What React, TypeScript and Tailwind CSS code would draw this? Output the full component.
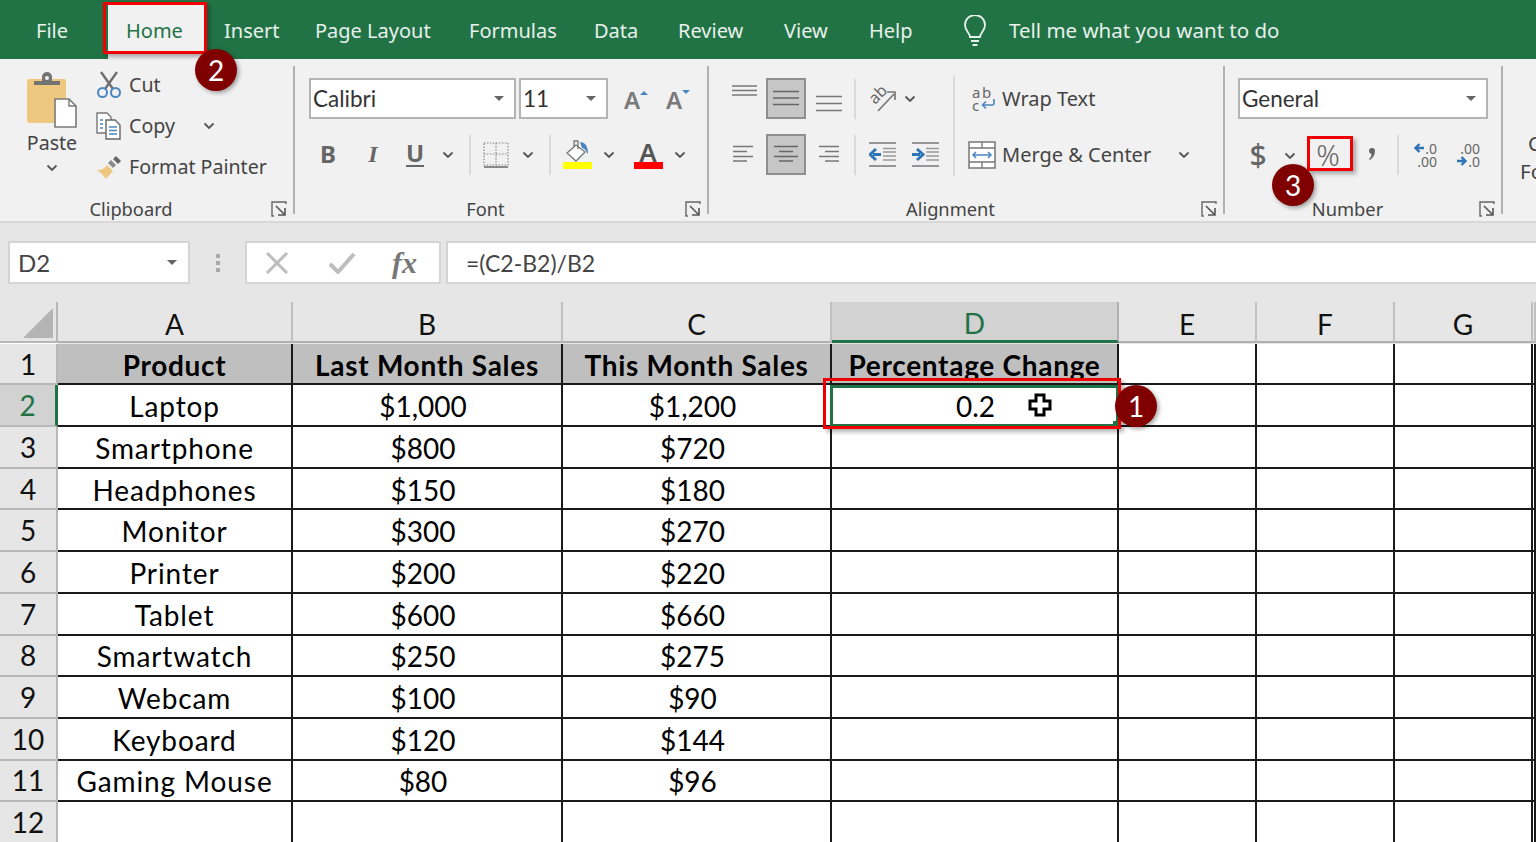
import type { ReactNode } from 'react';

const UI = 'font-["Noto_Sans",sans-serif]';
const CELL = 'font-["Lato","Noto_Sans",sans-serif]';

const tabs = [
  { label: 'Insert', width: 'w-[91px]' },
  { label: 'Page Layout', width: 'w-[154px]' },
  { label: 'Formulas', width: 'w-[125px]' },
  { label: 'Data', width: 'w-[84px]' },
  { label: 'Review', width: 'w-[106px]' },
  { label: 'View', width: 'w-[85px]' },
  { label: 'Help', width: 'w-[93px]' },
];

const products = [
  ['Laptop', '$1,000', '$1,200'],
  ['Smartphone', '$800', '$720'],
  ['Headphones', '$150', '$180'],
  ['Monitor', '$300', '$270'],
  ['Printer', '$200', '$220'],
  ['Tablet', '$600', '$660'],
  ['Smartwatch', '$250', '$275'],
  ['Webcam', '$100', '$90'],
  ['Keyboard', '$120', '$144'],
  ['Gaming Mouse', '$80', '$96'],
  ['', '', ''],
];

function Chevron({ className = '' }: { className?: string }) {
  return (
    <svg width="12" height="8" viewBox="0 0 12 8" className={`shrink-0 ${className}`}>
      <path d="M1.5 1.5 6 6l4.5-4.5" fill="none" stroke="#555" strokeWidth="1.8" />
    </svg>
  );
}

function Launcher() {
  return (
    <svg width="16" height="16" viewBox="0 0 16 16">
      <path d="M15 3V1H1v14h2" fill="none" stroke="#666" strokeWidth="1.4" />
      <path d="M5 5l8 8M14 7v7H7" fill="none" stroke="#555" strokeWidth="1.6" />
    </svg>
  );
}

function Caret() {
  return <span className="h-0 w-0 border-x-[5px] border-t-[5px] border-x-transparent border-t-[#666]" />;
}

function Combo({ value, className }: { value: string; className: string }) {
  return (
    <div className={`flex h-[41px] items-center justify-between border-2 border-[#b4b4b4] bg-white pl-[2px] pr-[10px] ${CELL} text-[22.500px] text-[#333] ${className}`}>
      <span>{value}</span>
      <Caret />
    </div>
  );
}

function Lines({ rows, width = 30, height = 28, color = '#777' }: { rows: number[][]; width?: number; height?: number; color?: string }) {
  return (
    <svg width={width} height={height} viewBox={`0 0 ${width} ${height}`} className="shrink-0">
      {rows.map(([x1, x2, y], i) => (
        <path key={i} d={`M${x1} ${y}H${x2}`} stroke={color} strokeWidth="1.5" />
      ))}
    </svg>
  );
}

function Group({ width, label, children }: { width: string; label: string; children: ReactNode }) {
  return (
    <section className={`flex h-full shrink-0 flex-col ${width}`}>
      <div className="h-[136px] shrink-0">{children}</div>
      <div className="flex h-[28px] items-center">
        <span className={`flex-1 pr-[3px] text-center ${UI} text-[18.300px] text-[#444]`}>{label}</span>
        <span className="flex w-[28px] justify-center">
          <Launcher />
        </span>
      </div>
    </section>
  );
}

function Sep() {
  return <div className="my-[7px] w-[2px] shrink-0 bg-[#b0b0b0]" />;
}

function MiniSep() {
  return <div className="h-[40px] w-[2px] shrink-0 bg-[#dadada]" />;
}

function Slot({ w, children, className = '' }: { w: string; children?: ReactNode; className?: string }) {
  return <div className={`flex h-[41px] shrink-0 items-center justify-center *:shrink-0 ${w} ${className}`}>{children}</div>;
}

function PasteIcon() {
  return (
    <svg width="52" height="56" viewBox="0 0 52 56">
      <rect x="1" y="7" width="39" height="44" rx="2" fill="#edc87e" />
      <path d="M8 13V9h8V5a4 4 0 0 1 10 0v4h8v4z" fill="#737373" />
      <circle cx="21" cy="6" r="2" fill="#f1f1f1" />
      <path d="M29 27h14l7 7v21H29z" fill="#fff" stroke="#7a7a7a" strokeWidth="1.6" />
      <path d="M43 27v7h7" fill="none" stroke="#7a7a7a" strokeWidth="1.4" />
    </svg>
  );
}

function CutIcon() {
  return (
    <svg width="26" height="28" viewBox="0 0 26 28">
      <path d="M5 1l12 17M21 1L9 18" stroke="#6f6f6f" strokeWidth="2.4" fill="none" />
      <circle cx="6.5" cy="21.5" r="4.5" fill="none" stroke="#4a86c0" strokeWidth="2" />
      <circle cx="19.5" cy="21.5" r="4.5" fill="none" stroke="#4a86c0" strokeWidth="2" />
    </svg>
  );
}

function CopyIcon() {
  return (
    <svg width="26" height="28" viewBox="0 0 26 28">
      <path d="M1 1h10l4 4v16H1z" fill="#fff" stroke="#777" strokeWidth="1.4" />
      <path d="M10 8h9l5 5v14H10z" fill="#fff" stroke="#666" strokeWidth="1.4" />
      <path d="M13 15h8M13 18.500h8M13 22h8M4 8h3M4 12h3M4 16h3" stroke="#4a86c0" strokeWidth="1.4" />
    </svg>
  );
}

function PainterIcon() {
  return (
    <svg width="26" height="24" viewBox="0 0 26 24">
      <path d="M1 15c5 0 8-2 10-5l6 6c-3 3-5 6-7 8-2-3-5-6-9-9z" fill="#edc87e" />
      <path d="M12 8l3-3 5 5-3 3z" fill="#8a8a8a" />
      <path d="M17 4l3-3 5 5-3 3z" fill="#666" />
    </svg>
  );
}

function GrowFont({ up }: { up: boolean }) {
  return (
    <span className={`flex h-[36px] w-[24px] items-start ${UI}`}>
      <span className="w-[16px] pt-[2px] text-[24px] font-semibold leading-[34px] text-[#7a7a7a]">A</span>
      <svg width="8" height="5" viewBox="0 0 8 5" className="mt-[9px]">
        <path d={up ? 'M0 5l4-4 4 4z' : 'M0 0h8L4 4z'} fill="#4a86c0" />
      </svg>
    </span>
  );
}

function BorderIcon() {
  return (
    <svg width="26" height="26" viewBox="0 0 26 26">
      <path d="M1 1h24v22H1zM13 1v22M1 12h24" fill="none" stroke="#8a8a8a" strokeWidth="1.2" strokeDasharray="1.500 1.500" />
      <path d="M1 25h24" stroke="#666" strokeWidth="1.500" />
    </svg>
  );
}

function FillIcon() {
  return (
    <svg width="30" height="30" viewBox="0 0 30 30">
      <path d="M13 5 4 13l9 8 9-9z" fill="#fff" stroke="#777" strokeWidth="1.3" />
      <path d="M11 7V1h4v8" fill="none" stroke="#777" strokeWidth="1.3" />
      <path d="M17 2c5 0 8 4 8 12-2-2-2-5-6-6z" fill="#4a86c0" />
      <rect x="0" y="22" width="29" height="7" fill="#ffff00" />
    </svg>
  );
}

function FontColorIcon() {
  return (
    <span className={`flex w-[29px] flex-col items-center ${UI}`}>
      <span className="h-[22px] text-[26px] font-semibold leading-[24px] text-[#555]">A</span>
      <span className="h-[7px] w-[29px] bg-[#ff0000]" />
    </span>
  );
}

function OrientationIcon() {
  return (
    <span className={`relative block h-[28px] w-[28px] ${UI}`}>
      <span className="absolute left-[0px] top-[1px] -rotate-45 text-[16px] leading-[16px] text-[#666]">ab</span>
      <svg width="28" height="28" viewBox="0 0 28 28" className="absolute left-0 top-0">
        <path d="M10 26 26 9M19 7h8v8" fill="none" stroke="#777" strokeWidth="1.7" />
      </svg>
    </span>
  );
}

function IndentIcon({ right }: { right: boolean }) {
  return (
    <svg width="27" height="25" viewBox="0 0 27 25">
      <path d="M0 1h27M0 24h27" stroke="#777" strokeWidth="1.500" />
      <path d="M14 6.500h13M14 10h13M14 14h13M14 18h13" stroke="#999" strokeWidth="1.300" />
      <path d={right ? 'M0 12.500h8M5 7l6 5.500-6 5.500' : 'M12 12.500H4M7 7l-6 5.500 6 5.500'} fill="none" stroke="#2f75b5" strokeWidth="3" />
    </svg>
  );
}

function WrapIcon() {
  return (
    <span className={`flex w-[24px] flex-col ${UI} text-[15px] leading-[13px] text-[#666]`}>
      <span className="tracking-[1.5px]">ab</span>
      <span className="flex items-center">
        c
        <svg width="14" height="12" viewBox="0 0 14 12" className="ml-[2px]">
          <path d="M13 0v4a2 2 0 0 1-2 2H2M5 2.500 1.500 6 5 9.500" fill="none" stroke="#4a86c0" strokeWidth="1.600" />
        </svg>
      </span>
    </span>
  );
}

function MergeIcon() {
  return (
    <svg width="28" height="28" viewBox="0 0 28 28">
      <rect x="1" y="1" width="26" height="26" fill="#fff" stroke="#777" strokeWidth="1.500" />
      <path d="M1 7h26M1 21h26M14 1v6M14 21v6" stroke="#777" strokeWidth="1.300" />
      <path d="M5 14h18M8 11l-3 3 3 3M20 11l3 3-3 3" fill="none" stroke="#4a86c0" strokeWidth="1.500" />
    </svg>
  );
}

function DecimalIcon({ more }: { more: boolean }) {
  const arrow = more ? (
    <svg width="10" height="10" viewBox="0 0 10 10" className="mr-[1px]">
      <path d="M10 5H2M5.500 1 1.500 5l4 4" fill="none" stroke="#2f75b5" strokeWidth="2.400" />
    </svg>
  ) : (
    <svg width="10" height="10" viewBox="0 0 10 10" className="mr-[1px]">
      <path d="M0 5h8M4.500 1l4 4-4 4" fill="none" stroke="#2f75b5" strokeWidth="2.400" />
    </svg>
  );
  return (
    <span className={`flex w-[24px] flex-col items-end ${UI} text-[14px] leading-[13px] text-[#666]`}>
      {more ? (
        <>
          <span className="flex items-center">{arrow}.0</span>
          <span>.00</span>
        </>
      ) : (
        <>
          <span>.00</span>
          <span className="flex items-center">{arrow}.0</span>
        </>
      )}
    </span>
  );
}

function Ribbon() {
  return (
    <div className="flex h-[164px] overflow-hidden border-b-2 border-[#d8d8d8] bg-[#f1f1f1]">
      <Group width="w-[293px]" label="Clipboard">
        <div className={`flex ${UI} text-[19.600px] text-[#444]`}>
          <div className="flex w-[96px] flex-col items-center pl-[8px] pt-[13px]">
            <PasteIcon />
            <span className="mt-[1px] leading-[28px]">Paste</span>
            <Chevron className="mt-[7px]" />
          </div>
          <div className="pt-[5px]">
            <div className="flex h-[41px] items-center">
              <span className="w-[33px]"><CutIcon /></span>Cut
            </div>
            <div className="flex h-[41px] items-center">
              <span className="w-[33px]"><CopyIcon /></span>Copy
              <Chevron className="ml-[28px]" />
            </div>
            <div className="flex h-[41px] items-center">
              <span className="w-[33px]"><PainterIcon /></span>Format Painter
            </div>
          </div>
        </div>
      </Group>
      <Sep />
      <Group width="w-[412px]" label="Font">
        <div className="pl-[14px] pt-[19px]">
          <div className="flex">
            <Combo value="Calibri" className="w-[207px]" />
            <Combo value="11" className="ml-[3px] w-[89px]" />
            <Slot w="w-[50px]" className="pl-[6px]"><GrowFont up /></Slot>
            <Slot w="w-[40px]"><GrowFont up={false} /></Slot>
          </div>
          <div className={`mt-[15px] flex items-center ${UI} text-[24px] text-[#666]`}>
            <Slot w="w-[38px]" className="pb-[2px]"><b>B</b></Slot>
            <Slot w="w-[52px]" className="pb-[2px]"><i className="font-['Liberation_Serif'] font-bold">I</i></Slot>
            <Slot w="w-[32px]" className="pb-[2px]"><b className="border-b-2 border-[#666] leading-[24px]">U</b></Slot>
            <Slot w="w-[34px]"><Chevron /></Slot>
            <Slot w="w-[10px]"><MiniSep /></Slot>
            <Slot w="w-[41px]"><BorderIcon /></Slot>
            <Slot w="w-[24px]"><Chevron /></Slot>
            <Slot w="w-[20px]"><MiniSep /></Slot>
            <Slot w="w-[36px]"><FillIcon /></Slot>
            <Slot w="w-[26px]"><Chevron /></Slot>
            <Slot w="w-[52px]"><FontColorIcon /></Slot>
            <Slot w="w-[12px]"><Chevron /></Slot>
          </div>
        </div>
      </Group>
      <Sep />
      <Group width="w-[514px]" label="Alignment">
        <div className="flex pl-[17px] pt-[17px]">
          <div className="w-[227px] pt-[2px]">
            <div className="flex">
              <Slot w="w-[40px]"><Lines rows={[[1, 26, 1], [1, 26, 5.5], [1, 26, 10]]} /></Slot>
              <Slot w="w-[40px]" className="border-2 border-[#8e8e8e] bg-[#c6c6c6]"><Lines rows={[[2, 28, 6.5], [2, 28, 13], [2, 28, 19.5]]} color="#666" /></Slot>
              <Slot w="w-[46px]"><Lines rows={[[2, 28, 11.5], [2, 28, 18.5], [2, 28, 25.5]]} /></Slot>
              <Slot w="w-[6px]"><MiniSep /></Slot>
              <Slot w="w-[48px]"><OrientationIcon /></Slot>
              <Slot w="w-[8px]"><Chevron /></Slot>
            </div>
            <div className="mt-[15px] flex">
              <Slot w="w-[40px]"><Lines rows={[[2, 22, 5.5], [2, 16, 10.5], [2, 22, 15.5], [2, 16, 20]]} /></Slot>
              <Slot w="w-[40px]" className="border-2 border-[#8e8e8e] bg-[#c6c6c6]"><Lines rows={[[3, 27, 5.5], [8, 22, 10.5], [3, 27, 15.5], [8, 22, 20]]} color="#666" /></Slot>
              <Slot w="w-[46px]"><Lines rows={[[5, 25, 5.5], [11, 25, 10.5], [5, 25, 15.5], [11, 25, 20]]} /></Slot>
              <Slot w="w-[6px]"><MiniSep /></Slot>
              <Slot w="w-[48px]"><IndentIcon right={false} /></Slot>
              <Slot w="w-[38px]"><IndentIcon right /></Slot>
            </div>
          </div>
          <div className="h-[100px] w-[2px] shrink-0 bg-[#dadada]" />
          <div className={`${UI} pt-[2px] text-[20px] text-[#444]`}>
            <div className="flex h-[41px] items-center">
              <span className="ml-[17px] mr-[6px] flex w-[24px]"><WrapIcon /></span>Wrap Text
            </div>
            <div className="mt-[15px] flex h-[41px] items-center">
              <span className="ml-[13px] mr-[6px] flex w-[28px]"><MergeIcon /></span>Merge &amp; Center
              <Chevron className="ml-[27px]" />
            </div>
          </div>
        </div>
      </Group>
      <Sep />
      <Group width="w-[276px]" label="Number">
        <div className="pl-[13px] pt-[19px]">
          <Combo value="General" className="w-[250px]" />
          <div className={`mt-[15px] flex ${UI} text-[28px] text-[#666]`}>
            <Slot w="w-[40px]" className="text-[30px] font-medium">$</Slot>
            <Slot w="w-[24px]" className="pt-[3px]"><Chevron /></Slot>
            <Slot w="w-[52px]" className="text-[29px] font-light">%</Slot>
            <Slot w="w-[36px]">
              <svg width="10" height="16" viewBox="0 0 10 16">
                <path d="M2 4a3 3 0 0 1 6 0c0 4-2 7-5 9l-1-1c1.500-1 2.500-3 2.500-5A3 3 0 0 1 2 4z" fill="#666" />
              </svg>
            </Slot>
            <Slot w="w-[16px]"><MiniSep /></Slot>
            <Slot w="w-[38px]"><DecimalIcon more /></Slot>
            <Slot w="w-[48px]"><DecimalIcon more={false} /></Slot>
          </div>
        </div>
      </Group>
      <Sep />
      <div className={`flex-1 pl-[17px] pt-[70px] ${UI} text-[20.500px] leading-[28px] text-[#444]`}>
        <div className="pl-[8px]">C</div>
        <div>Fo</div>
      </div>
    </div>
  );
}

function FormulaBar() {
  return (
    <div className={`flex h-[79px] bg-[#e6e6e6] pl-[8px] pt-[18px] ${CELL} text-[24px]`}>
      <div className="flex h-[43px] w-[182px] items-center justify-between border-2 border-[#d4d4d4] bg-white pl-[8px] pr-[11px] text-[#444]">
        <span>D2</span>
        <Caret />
      </div>
      <div className="flex h-[43px] w-[55px] flex-col items-center justify-center gap-[3px]">
        <span className="h-[4px] w-[4px] bg-[#aaa]" />
        <span className="h-[4px] w-[4px] bg-[#aaa]" />
        <span className="h-[4px] w-[4px] bg-[#aaa]" />
      </div>
      <div className="flex h-[43px] w-[196px] items-center border-2 border-[#d4d4d4] bg-white">
        <span className="ml-[18px]">
          <svg width="24" height="22" viewBox="0 0 24 22">
            <path d="M2 1l20 20M22 1 2 21" stroke="#bdbdbd" strokeWidth="3" />
          </svg>
        </span>
        <span className="ml-[39px]">
          <svg width="28" height="22" viewBox="0 0 28 22">
            <path d="M2 12l8 8L26 2" fill="none" stroke="#bdbdbd" strokeWidth="4" />
          </svg>
        </span>
        <span className="ml-[36px] font-['Liberation_Serif'] text-[30px] font-bold italic text-[#777]">fx</span>
      </div>
      <div className="ml-[5px] flex h-[43px] flex-1 items-center border-2 border-r-0 border-[#d4d4d4] bg-white pl-[18px] pt-[1px] text-[23px] text-[#444]">
        =(C2-B2)/B2
      </div>
    </div>
  );
}

function ColHead({ label, active }: { label?: string; active?: boolean }) {
  return (
    <div className={`flex h-[41px] items-end justify-center border-r-2 pt-[2px] text-[28px] leading-[34px] ${active ? 'border-b-[3px] border-b-[#217346] border-r-[#b0b0b0] bg-[#d2d2d2] text-[#217346]' : 'border-b-2 border-b-[#b0b0b0] border-r-[#c0c0c0] text-[#111]'}`}>
      {label}
    </div>
  );
}

function Cell({ children, head, className = '' }: { children?: ReactNode; head?: boolean; className?: string }) {
  return (
    <div className={`flex items-center justify-center border-b-2 border-r-2 border-[#1a1a1a] pt-[2px] text-black ${head ? 'bg-[#bfbfbf] font-bold tracking-[0.7px]' : 'bg-white'} ${className}`}>
      {children}
    </div>
  );
}

function Sheet() {
  return (
    <div className={`grid grid-cols-[58px_235px_270px_269px_287px_138px_138px_138px_1fr] auto-rows-[41.700px] bg-white ${CELL} text-[28px]`}>
      <div className="flex h-[41px] items-end justify-end border-b-2 border-r-2 border-[#b8b8b8] bg-[#e6e6e6] p-[3px]">
        <span className="h-0 w-0 border-b-[30px] border-l-[30px] border-b-[#b4b4b4] border-l-transparent" />
      </div>
      {['A', 'B', 'C'].map((c) => (
        <div key={c} className="bg-[#e6e6e6]"><ColHead label={c} /></div>
      ))}
      <div className="bg-[#e6e6e6]"><ColHead label="D" active /></div>
      {['E', 'F', 'G', ''].map((c) => (
        <div key={c} className="bg-[#e6e6e6]"><ColHead label={c} /></div>
      ))}

      <div className="flex items-center justify-center border-b-2 border-r-2 border-[#b8b8b8] bg-[#e6e6e6] text-[#111]">1</div>
      <Cell head>Product</Cell>
      <Cell head>Last Month Sales</Cell>
      <Cell head>This Month Sales</Cell>
      <Cell head>Percentage Change</Cell>
      <Cell /><Cell /><Cell /><Cell className="border-r-0" />

      {products.map((row, i) => {
        const n = i + 2;
        return (
          <div key={n} className="contents">
            <div className={`flex items-center justify-center border-b-2 border-[#b8b8b8] ${n === 2 ? 'border-r-[3px] border-r-[#217346] bg-[#d2d2d2] text-[#217346]' : 'border-r-2 bg-[#e6e6e6] text-[#111]'}`}>
              {n}
            </div>
            <Cell className="tracking-[0.9px]">{row[0]}</Cell>
            <Cell className="pr-[8px]">{row[1]}</Cell>
            <Cell className="pr-[8px]">{row[2]}</Cell>
            {n === 2 ? (
              <div className="relative -ml-[2px] flex items-center justify-center border-[3px] border-[#217346] bg-white pb-[1px] pl-[2px] text-black">
                0.2
                <svg width="26" height="26" viewBox="0 0 26 26" className="absolute left-[194px] top-[4px]">
                  <path d="M9 3h8v6h6v8h-6v6H9v-6H3V9h6z" fill="#fff" stroke="#000" strokeWidth="3" />
                </svg>
                <span className="absolute -bottom-[3px] -right-[3px] h-[6px] w-[6px] bg-[#217346]" />
              </div>
            ) : (
              <Cell />
            )}
            <Cell /><Cell /><Cell /><Cell className="border-r-0" />
          </div>
        );
      })}
    </div>
  );
}

function Badge({ n, className }: { n: number; className: string }) {
  return (
    <div className={`absolute flex h-[42px] w-[42px] items-center justify-center rounded-full bg-[#800000] ${CELL} text-[28px] text-white shadow-[2px_2px_4px_rgba(0,0,0,0.35)] ${className}`}>
      {n}
    </div>
  );
}

export default function App() {
  return (
    <div className="relative h-[842px] w-full overflow-hidden bg-white">
      <div className={`flex h-[59px] items-end bg-[#217346] pl-[36px] ${UI} text-[20px] text-[#e8f0eb]`}>
        <div className="flex h-[54px] items-center pb-[3px]">
          <span className="w-[72px]">File</span>
          <span className="-mb-[3px] mr-[20px] flex h-[54px] w-[96px] items-center bg-[#f1f1f1] pb-[3px] pl-[18px] text-[#217346]">Home</span>
          {tabs.map((t) => (
            <span key={t.label} className={t.width}>{t.label}</span>
          ))}
          <span className="flex items-center gap-[21px] text-[20.500px]">
            <svg width="26" height="32" viewBox="0 0 26 32">
              <path d="M8 22c0-4-5-6-5-12a10 10 0 0 1 20 0c0 6-5 8-5 12z" fill="none" stroke="#e8f0eb" strokeWidth="1.800" />
              <path d="M9 26h8M10.500 30h5" stroke="#e8f0eb" strokeWidth="1.800" />
            </svg>
            Tell me what you want to do
          </span>
        </div>
      </div>
      <Ribbon />
      <FormulaBar />
      <Sheet />

      {/* callouts */}
      <div className="absolute left-[103px] top-[2px] h-[52px] w-[104px] border-[3px] border-[#f00000] shadow-[3px_3px_4px_rgba(0,0,0,0.3)]" />
      <div className="absolute left-[1307px] top-[136px] h-[35px] w-[46px] border-[3px] border-[#f00000] shadow-[3px_3px_4px_rgba(0,0,0,0.3)]" />
      <div className="absolute left-[823px] top-[378px] h-[51px] w-[298px] border-[3px] border-[#f00000] shadow-[3px_3px_4px_rgba(0,0,0,0.3)]" />
      <Badge n={2} className="left-[195px] top-[49px]" />
      <Badge n={3} className="left-[1272px] top-[164px]" />
      <Badge n={1} className="left-[1115px] top-[385px]" />
    </div>
  );
}
